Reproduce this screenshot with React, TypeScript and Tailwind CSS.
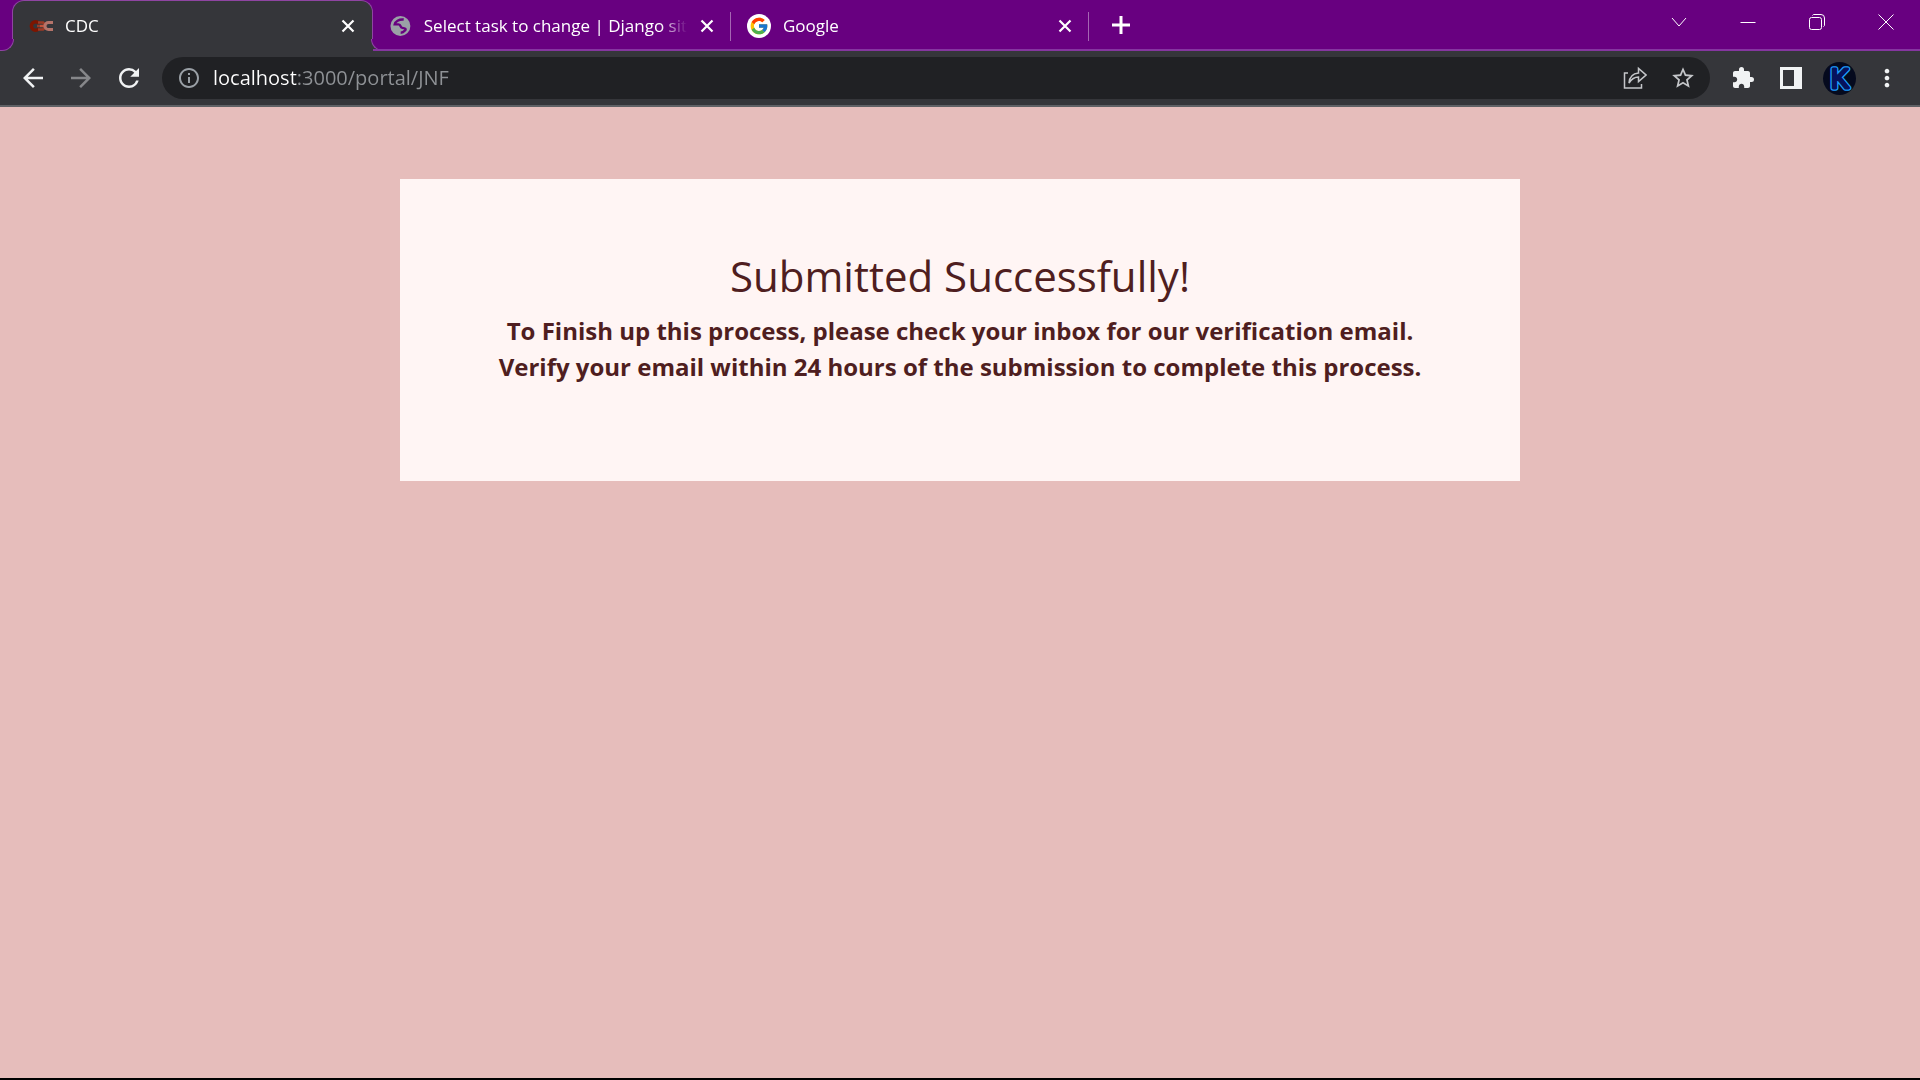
import React from "react";
import {
  MdArrowBack,
  MdArrowForward,
  MdExtension,
  MdMoreVert,
  MdOutlineInfo,
  MdRefresh,
  MdStarBorder,
} from "react-icons/md";
import { FcGoogle } from "react-icons/fc";

function ChainIcon() {
  return (
    <svg viewBox="0 0 24 24" className="size-6" fill="none">
      <path d="M9.500 9A4.200 4.200 0 1 0 9.500 15" stroke="#7d1500" strokeWidth="3.500" />
      <path d="M8 12h3M9 8.500h5l2 2M9 15.500h5l2-2" stroke="#9c3a26" strokeWidth="2.500" />
      <path d="M11 12h6" stroke="#c4543c" strokeWidth="2.500" />
      <path d="M24 8.500h-4.500a3.500 3.500 0 0 0 0 7H24" stroke="#b5746a" strokeWidth="3" />
    </svg>
  );
}

function GlobeIcon() {
  return (
    <svg viewBox="0 0 24 24" className="size-6" fill="none">
      <circle cx="12" cy="12" r="10.500" fill="#9aa0a6" />
      <path
        d="M15.500 5.200C10.500 4.600 6.500 7.500 6 10.300H10C13 10.300 11.300 13.600 14 14S18.500 14.800 16.800 16.800 13 19 12.300 19"
        stroke="#680080"
        strokeWidth="2.600"
      />
    </svg>
  );
}

function GoogleIcon() {
  return (
    <span className="flex size-6 items-center justify-center rounded-full bg-white">
      <FcGoogle className="size-5" />
    </span>
  );
}

function CloseIcon() {
  return (
    <svg viewBox="0 0 24 24" className="size-6" stroke="#fff" strokeWidth="2.200">
      <path d="M6.500 6.500l11 11M17.500 6.500l-11 11" />
    </svg>
  );
}

function Tab({
  icon,
  title,
  active = false,
}: {
  icon: React.ReactNode;
  title: string;
  active?: boolean;
}) {
  return (
    <div
      className={
        active
          ? "relative flex w-[361px] shrink-0 items-center rounded-t-xl border-x border-t border-[#8f45a2] bg-[#35363a] pr-3 pl-4"
          : "relative flex w-[358px] shrink-0 items-center border-b-2 border-[#8536a0] pt-0.5 pr-3 pl-4"
      }
    >
      {active && (
        <>
          <span className="absolute bottom-0 -left-[13px] h-3 w-[14px] bg-[#35363a]">
            <span className="block size-full rounded-br-xl border-r border-b border-[#8f45a2] bg-[#680080]" />
          </span>
          <span className="absolute -right-[13px] bottom-0 h-3 w-[14px] bg-[#35363a]">
            <span className="block size-full rounded-bl-xl border-b border-l border-[#8f45a2] bg-[#680080]" />
          </span>
        </>
      )}
      <button className="flex min-w-0 flex-1 items-center gap-3 text-left">
        {icon}
        <span className="flex-1 mask-r-from-90% text-[17px] whitespace-nowrap text-white">
          {title}
        </span>
      </button>
      <button aria-label={`Close ${title}`} className="ml-2">
        <CloseIcon />
      </button>
      {!active && <span className="absolute top-3 right-0 h-[29px] w-px bg-[#a566b3]" />}
    </div>
  );
}

function WindowButton({ label, children }: { label: string; children: React.ReactNode }) {
  return (
    <button aria-label={label} className="flex h-[43px] w-[69px] items-center justify-center">
      <svg viewBox="0 0 16 16" className="size-4" fill="none" stroke="#fff">
        {children}
      </svg>
    </button>
  );
}

function ToolButton({ label, children }: { label: string; children: React.ReactNode }) {
  return (
    <button
      aria-label={label}
      className="flex h-10 w-12 shrink-0 items-center justify-center text-[#f1f3f4]"
    >
      {children}
    </button>
  );
}

function Avatar() {
  const letter = {
    x: 17,
    y: 26,
    textAnchor: "middle" as const,
    fontFamily: "Liberation Sans, sans-serif",
    fontSize: 27,
    strokeLinejoin: "round" as const,
  };
  return (
    <svg viewBox="0 0 33 33" className="size-[33px]">
      <circle cx="16.500" cy="16.500" r="16.500" fill="#050a1e" />
      <text {...letter} stroke="#1c9cff" strokeWidth="5.500">
        K
      </text>
      <text {...letter} aria-hidden="true" fill="#06125c" stroke="#06125c" strokeWidth="2.800">
        K
      </text>
    </svg>
  );
}

function TabStrip() {
  return (
    <div className="flex h-[51px] bg-[#680080]">
      <div className="w-3 shrink-0" />
      <Tab icon={<ChainIcon />} title="CDC" active />
      <Tab icon={<GlobeIcon />} title="Select task to change | Django sit" />
      <Tab icon={<GoogleIcon />} title="Google" />
      <div className="flex flex-1 items-center justify-between border-b-2 border-[#8536a0]">
        <button aria-label="New tab" className="ml-5 flex size-6 items-center justify-center">
          <svg viewBox="0 0 24 24" className="size-6" stroke="#fff" strokeWidth="3">
            <path d="M12 3v18M3 12h18" />
          </svg>
        </button>
        <div className="flex self-start">
          <WindowButton label="Search tabs">
            <path d="M1 4l7 8 7-8" />
          </WindowButton>
          <WindowButton label="Minimize">
            <path d="M0.500 8.500h15" />
          </WindowButton>
          <WindowButton label="Restore">
            <rect x="0.500" y="3.500" width="12" height="12" rx="2" />
            <path d="M3.500 1.500a2 2 0 0 1 1-1H12a3.500 3.500 0 0 1 3.500 3.500v7.500a2 2 0 0 1-1 1" />
          </WindowButton>
          <WindowButton label="Close window">
            <path d="M0.500 0.500l15 15M15.500 0.500l-15 15" />
          </WindowButton>
        </div>
      </div>
    </div>
  );
}

function Toolbar() {
  return (
    <div className="flex h-14 items-center border-b-2 border-[#5f6165] bg-[#35363a] px-[9px]">
      <ToolButton label="Back">
        <MdArrowBack className="size-[30px]" />
      </ToolButton>
      <ToolButton label="Forward">
        <MdArrowForward className="size-[30px] text-[#86878a]" />
      </ToolButton>
      <ToolButton label="Reload">
        <MdRefresh className="size-[30px]" />
      </ToolButton>
      <div className="mx-[9px] flex h-[42px] min-w-0 flex-1 items-center rounded-full bg-[#202124] pr-[3px] pl-[15px]">
        <button aria-label="View site information">
          <MdOutlineInfo className="size-6 text-[#9aa0a6]" />
        </button>
        <input
          aria-label="Address"
          defaultValue="localhost:3000/portal/JNF"
          className="ml-3 min-w-0 flex-1 bg-[linear-gradient(90deg,#fff_84px,#8f9296_84px)] bg-clip-text text-xl text-transparent outline-none"
        />
        <ToolButton label="Share">
          <svg viewBox="0 0 24 24" className="size-6" fill="none" stroke="#c4c6c9" strokeWidth="1.500">
            <path d="M5 7H1.500v15h17v-4" />
            <path d="M6 17C6.500 11 10 7.500 15.500 7V2.500L23 9l-7.500 6.500V11C11 11 8.500 13 6 17z" />
          </svg>
        </ToolButton>
        <ToolButton label="Bookmark this tab">
          <MdStarBorder className="size-[26px] text-[#c4c6c9]" />
        </ToolButton>
      </div>
      <ToolButton label="Extensions">
        <MdExtension className="size-6" />
      </ToolButton>
      <ToolButton label="Side panel">
        <svg viewBox="0 0 22 22" className="size-[22px]">
          <path d="M0 0h22v22H0zM3 3v16h11V3z" fill="#f1f3f4" fillRule="evenodd" />
        </svg>
      </ToolButton>
      <ToolButton label="Profile">
        <Avatar />
      </ToolButton>
      <ToolButton label="Menu">
        <MdMoreVert className="size-7" />
      </ToolButton>
    </div>
  );
}

export default function App() {
  return (
    <div className="flex min-h-screen flex-col border-b-2 border-black bg-[#e6bdbb] font-['Open_Sans',sans-serif]">
      <header>
        <TabStrip />
        <Toolbar />
      </header>
      <main className="flex-1 px-6 pt-[72px]">
        <section className="mx-auto max-w-[1120px] bg-[#fff5f4] px-10 pt-[72px] pb-24 text-center text-[#4f1e20]">
          <h1 className="text-[42px] leading-[50px]">Submitted Successfully!</h1>
          <p className="mt-3 text-2xl leading-9 font-bold">
            To Finish up this process, please check your inbox for our verification email.
            <br />
            Verify your email within 24 hours of the submission to complete this process.
          </p>
        </section>
      </main>
    </div>
  );
}
